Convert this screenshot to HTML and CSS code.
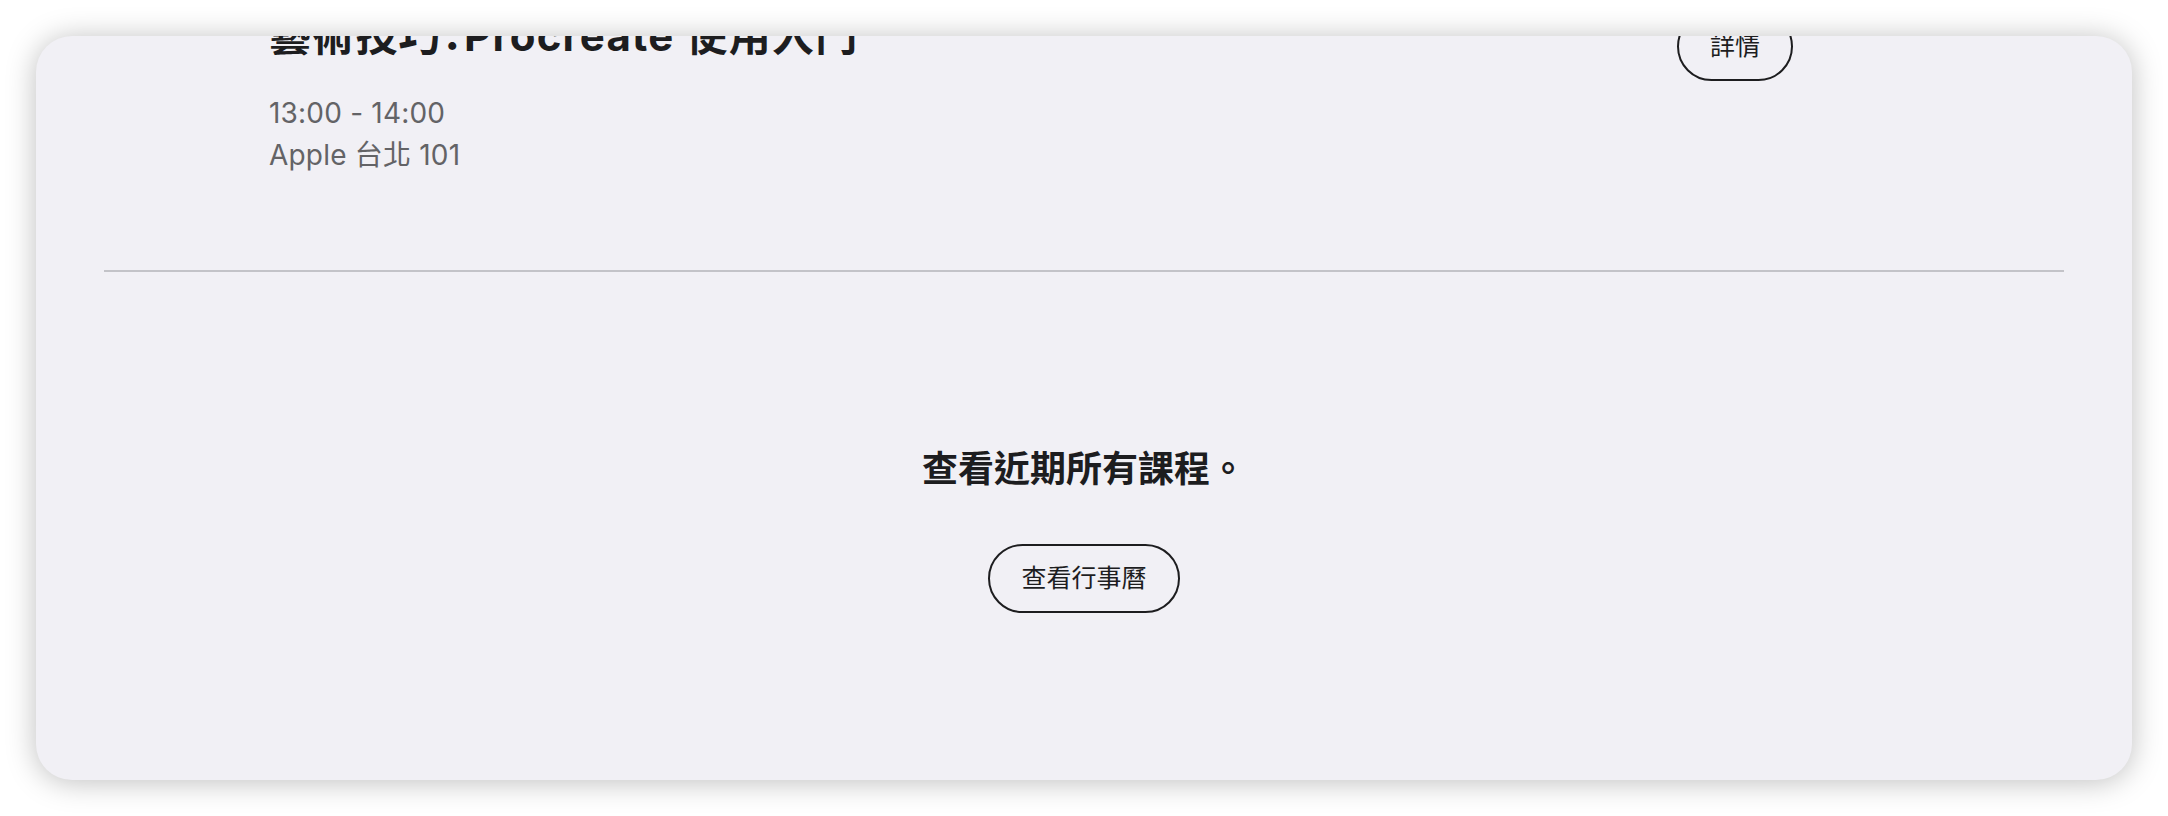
FILE: index.html
```html
<!DOCTYPE html>
<html lang="zh-Hant">

<head>
    <meta charset="UTF-8">
    <meta name="viewport" content="width=device-width, initial-scale=1.0">
    <title>Today at Apple 課程</title>
    <link rel="stylesheet" href="styles.css">
</head>

<body>
    <div class="card">
        <div class="event">
            <div class="event-info">
                <h2 class="event-title">藝術技巧：Procreate 使用入門</h2>
                <p class="event-meta">13:00 - 14:00</p>
                <p class="event-meta">Apple 台北 101</p>
            </div>
            <a class="pill-button" href="#">詳情</a>
        </div>

        <div class="calendar-cta">
            <h3 class="cta-title">查看近期所有課程。</h3>
            <a class="pill-button" href="#">查看行事曆</a>
        </div>
    </div>
</body>

</html>
```

FILE: styles.css
```css
* {
    margin: 0;
    padding: 0;
    box-sizing: border-box;
}

body {
    font-family: "Inter", "Noto Sans CJK TC", sans-serif;
    background: #ffffff;
    color: #1d1d1f;
    padding: 36px;
    height: 816px;
    overflow: hidden;
}

.card {
    background: #f1f0f5;
    border-radius: 36px;
    height: 744px;
    padding: 0 68px;
    overflow: hidden;
    box-shadow: 0 2px 30px rgba(0, 0, 0, 0.26);
}

/* list is scrolled, so the first row sits partly above the card edge */
.event {
    display: flex;
    justify-content: space-between;
    align-items: flex-start;
    margin-top: -24px;
    padding: 0 271px 94px 165px;
    border-bottom: 2px solid #c3c3c8;
}

.event-title {
    font-size: 42px;
    line-height: 48px;
    font-weight: 700;
    letter-spacing: 1.2px;
    font-feature-settings: "halt";
    margin-bottom: 32px;
}

.event-meta {
    font-size: 28px;
    line-height: 42px;
    letter-spacing: 0.2px;
    color: #636366;
}

.pill-button {
    display: inline-block;
    font-size: 25px;
    line-height: 31px;
    padding: 17px 31px;
    border: 2px solid #1d1d1f;
    border-radius: 999px;
    color: #1d1d1f;
    text-decoration: none;
}

.calendar-cta {
    display: flex;
    flex-direction: column;
    align-items: center;
    padding-top: 175px;
}

.cta-title {
    font-size: 36px;
    line-height: 44px;
    font-weight: 700;
    margin-bottom: 53px;
}
```
